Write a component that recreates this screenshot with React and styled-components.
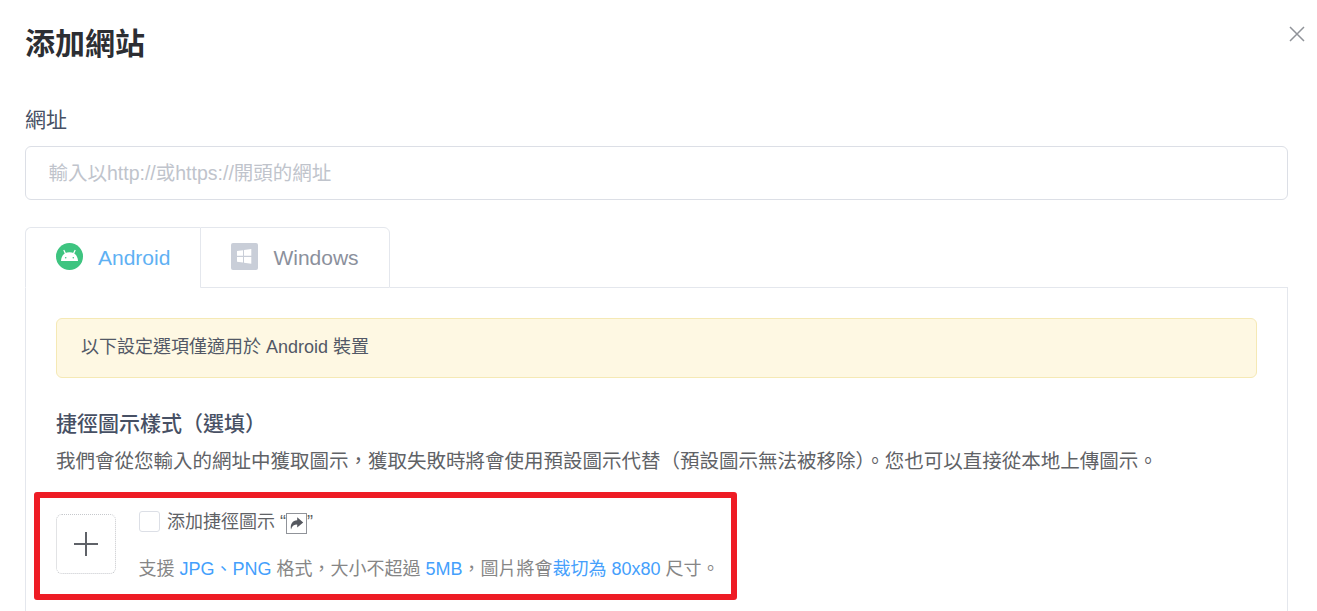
import React, { useState } from 'react'
import styled, { createGlobalStyle } from 'styled-components'

const tabs = ['Android', 'Windows']

function CloseIcon() {
  return (
    <svg width="16" height="16" viewBox="0 0 16 16" fill="none" stroke="#909399" strokeWidth="1.5">
      <path d="M1 1l14 14M15 1L1 15" />
    </svg>
  )
}

function AndroidIcon() {
  return (
    <svg width="27" height="27" viewBox="0 0 27 27">
      <circle cx="13.5" cy="13.5" r="13.5" fill="#3ec480" />
      <path d="M5 18c.2-3.600 1.600-6.200 4-7.700 2.600-1.500 6.400-1.500 9 0 2.400 1.500 3.800 4.100 4 7.700z" fill="#fff" />
      <path d="M8 7.500l1.700 3.500M19 7.500l-1.700 3.500" stroke="#fff" strokeWidth="1.300" strokeLinecap="round" />
      <circle cx="9.700" cy="14.800" r="0.800" fill="#3ec480" />
      <circle cx="17.300" cy="14.800" r="0.800" fill="#3ec480" />
    </svg>
  )
}

function WindowsIcon() {
  return (
    <svg width="27" height="27" viewBox="0 0 27 27">
      <rect width="27" height="27" rx="2" fill="#c9ced8" />
      <path
        d="M6 8l6-.8v5.6H6zM13 7l7.3-1v6.8H13zM6 13.9h6v5.6l-6-.8zM13 13.9h7.3v6.8l-7.3-1z"
        fill="#fff"
      />
    </svg>
  )
}

function ShareIcon() {
  return (
    <svg width="21" height="21" viewBox="0 0 21 21">
      <rect x="0.5" y="0.5" width="20" height="20" fill="#fff" stroke="#909399" />
      <path d="M11.200 4.200l6 5.200-6 5v-2.900c-3 0-5 1.300-6.200 4.900-1-5.400 1.600-9 6.200-9.200z" fill="#55585f" />
    </svg>
  )
}

function App() {
  const [active, setActive] = useState('Android')
  const [checked, setChecked] = useState(false)

  return (
    <Dialog>
      <GlobalStyle />
      <Header>
        <Title>添加網站</Title>
        <CloseButton aria-label="close">
          <CloseIcon />
        </CloseButton>
      </Header>
      <Label>網址</Label>
      <UrlInput placeholder="輸入以http://或https://開頭的網址" />
      <TabBar>
        {tabs.map((name) => (
          <Tab key={name} $active={active === name} onClick={() => setActive(name)}>
            {name === 'Android' ? <AndroidIcon /> : <WindowsIcon />}
            <TabName>{name}</TabName>
          </Tab>
        ))}
        <TabLine />
      </TabBar>
      <Panel>
        <Notice>以下設定選項僅適用於 Android 裝置</Notice>
        <SectionTitle>捷徑圖示樣式（選填）</SectionTitle>
        <Description>
          我們會從您輸入的網址中獲取圖示，獲取失敗時將會使用預設圖示代替（預設圖示無法被移除）。您也可以直接從本地上傳圖示。
        </Description>
        <UploadRow>
          <Highlight />
          <UploadBox aria-label="upload">
            <svg width="26" height="26" viewBox="0 0 26 26" stroke="#5f6268" strokeWidth="2">
              <path d="M13 1v24M1 13h24" />
            </svg>
          </UploadBox>
          <UploadInfo>
            <CheckRow onClick={() => setChecked(!checked)}>
              <CheckBox $checked={checked} />
              <CheckText>添加捷徑圖示 “</CheckText>
              <ShareIcon />
              <CheckText>”</CheckText>
            </CheckRow>
            <Hint>
              支援 <em>JPG、PNG</em> 格式，大小不超過 <em>5MB</em>，圖片將會<em>裁切為 80x80</em> 尺寸。
            </Hint>
          </UploadInfo>
        </UploadRow>
      </Panel>
    </Dialog>
  )
}

export default App

const GlobalStyle = createGlobalStyle`
* {
    box-sizing: border-box;
}
body {
    margin: 0;
    background: #fff;
    overflow: hidden;
    font-family: "Liberation Sans", "Noto Sans CJK TC", sans-serif;
}
button, input {
    font-family: inherit;
}
`;

const Dialog = styled.div`
height: 611px;
overflow: hidden;
padding: 0 29px 0 25px;
`;

const Header = styled.div`
display: flex;
justify-content: space-between;
height: 100px;
padding-top: 24px;
margin-right: -19px;
`;

const Title = styled.h1`
margin: 0;
font-size: 30px;
line-height: 40px;
font-weight: 700;
color: #2c2e33;
`;

const CloseButton = styled.button`
display: flex;
align-items: center;
justify-content: center;
width: 20px;
height: 20px;
padding: 0;
border: none;
background: none;
cursor: pointer;
`;

const Label = styled.div`
height: 46px;
line-height: 40px;
font-size: 21px;
color: #475064;
`;

const UrlInput = styled.input`
display: block;
width: 100%;
height: 54px;
padding: 0 22.5px;
border: 1px solid #dcdfe6;
border-radius: 6px;
font-size: 19.5px;
outline: none;
&::placeholder {
    color: #c0c4cc;
    opacity: 1;
}
`;

const TabBar = styled.div`
display: flex;
margin-top: 27px;
height: 61px;
`;

const Tab = styled.button`
display: flex;
align-items: center;
gap: 15px;
padding: 0 30px 2px;
font-size: 21px;
border: 1px solid #e4e7ed;
border-right: none;
border-bottom-color: ${({ $active }) => ($active ? 'transparent' : '#e4e7ed')};
background: #fff;
color: ${({ $active }) => ($active ? '#5fb1f3' : '#8b909c')};
cursor: pointer;
&:first-child {
    border-top-left-radius: 6px;
}
&:nth-child(2) {
    border-right: 1px solid #e4e7ed;
    border-top-right-radius: 6px;
}
`;

const TabName = styled.span`
padding-top: 3px;
`;

const TabLine = styled.div`
flex: 1;
border-bottom: 1px solid #e4e7ed;
`;

const Panel = styled.div`
height: 400px;
padding: 30px;
border: solid #e4e7ed;
border-width: 0 1px;
`;

const Notice = styled.div`
height: 60px;
padding: 0 24px;
line-height: 56px;
font-size: 18px;
color: #525866;
background: #fef8e3;
border: 1px solid #f5e9b5;
border-radius: 6px;
`;

const SectionTitle = styled.h2`
margin: 26px 0 0;
font-size: 21px;
line-height: 40px;
font-weight: 500;
color: #475064;
`;

const Description = styled.p`
margin: -1px 0 0;
height: 71px;
line-height: 36px;
font-size: 19.5px;
color: #606266;
white-space: nowrap;
`;

const UploadRow = styled.div`
position: relative;
display: flex;
gap: 22.5px;
`;

const Highlight = styled.div`
position: absolute;
left: -22px;
top: -22px;
width: 703px;
height: 108px;
border: 6px solid #ee1c25;
border-radius: 3px;
pointer-events: none;
`;

const UploadBox = styled.button`
display: flex;
align-items: center;
justify-content: center;
width: 60px;
height: 60px;
padding: 0;
border: 1px dotted #c6c8cc;
border-radius: 6px;
background: #fff;
cursor: pointer;
`;

const UploadInfo = styled.div`
display: flex;
flex-direction: column;
gap: 26px;
margin-top: -4px;
`;

const CheckRow = styled.div`
display: flex;
align-items: center;
height: 22px;
font-size: 18px;
line-height: 22px;
color: #606266;
cursor: pointer;
svg {
    margin-top: 4px;
}
`;

const CheckText = styled.span`
padding-top: 2px;
`;

const CheckBox = styled.div`
width: 21px;
height: 21px;
margin-right: 7.5px;
border: 1px solid #dcdfe6;
border-radius: 3px;
background: ${({ $checked }) => ($checked ? '#409eff' : '#fff')};
`;

const Hint = styled.div`
font-size: 18px;
line-height: 22px;
color: #868686;
white-space: nowrap;
em {
    font-style: normal;
    color: #459ffc;
}
`;
